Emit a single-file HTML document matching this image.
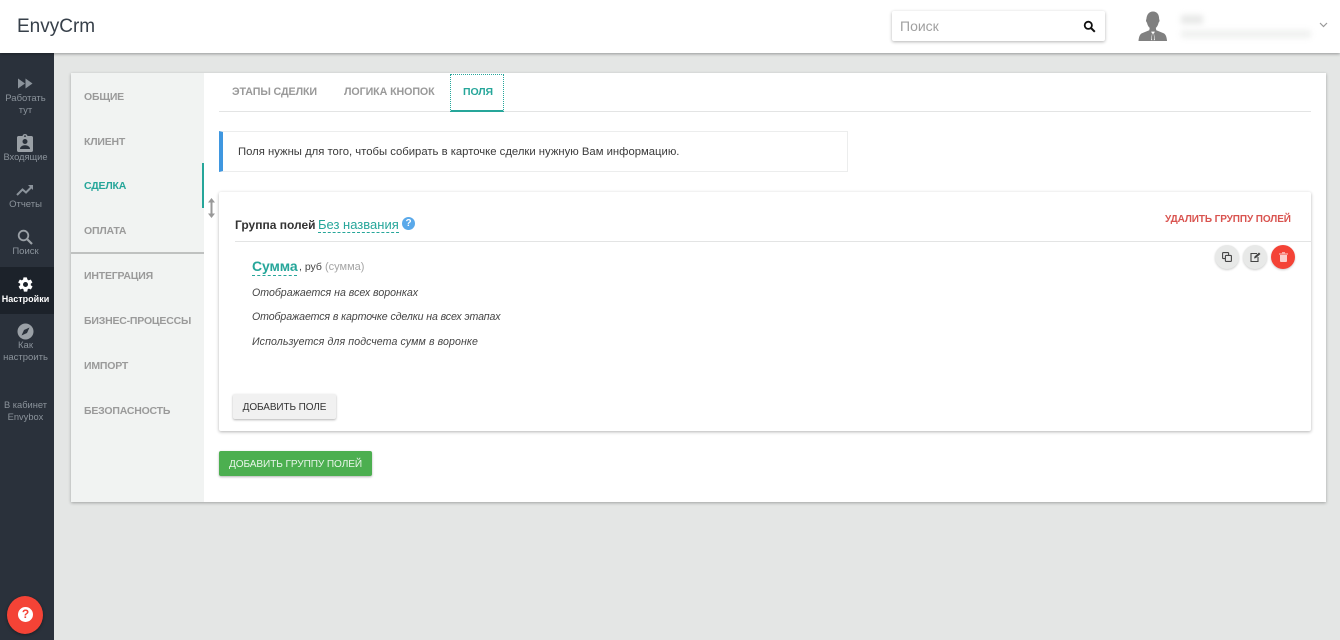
<!DOCTYPE html>
<html lang="ru"><head><meta charset="utf-8"><title>EnvyCrm</title>
<style>
*{box-sizing:border-box}
html,body{margin:0;padding:0;width:1340px;height:640px;overflow:hidden;background:#e4e6e5;font-family:"Liberation Sans",sans-serif;color:#333}
#w{left:0;top:0;width:1340px;height:640px;filter:blur(.35px)}
div,span,svg{position:absolute}
.t{white-space:nowrap;line-height:1}
.side{left:0;width:51px;text-align:center;color:#8b939b;font-size:9.5px;line-height:12px;white-space:nowrap}
.m{left:84px;font-size:10.5px;letter-spacing:-.2px;font-weight:bold;color:#9a9a9a;white-space:nowrap;line-height:12px}
.tab{font-size:10.7px;font-weight:bold;color:#999;white-space:nowrap;line-height:12px;top:86px;letter-spacing:-.1px}
.it{left:252px;font-size:10.6px;font-style:italic;color:#444;white-space:nowrap;line-height:12px}
.rb{width:24px;height:24px;border-radius:50%;top:245px;background:#e8e9e8;box-shadow:0 1px 2px rgba(0,0,0,.2)}
</style></head><body><div id="w">

<div style="left:0;top:0;width:1340px;height:53px;background:#fff;box-shadow:0 1px 3px rgba(0,0,0,.35);z-index:3"></div>
<div class="t" style="left:17px;top:17px;font-size:19px;color:#37404a;z-index:4">EnvyCrm</div>

<div style="left:892px;top:11px;width:213px;height:30px;background:#fff;border-radius:2px;box-shadow:0 1px 3px rgba(0,0,0,.3);z-index:4"></div>
<div class="t" style="left:900px;top:19px;font-size:14px;color:#a0a0a0;z-index:5">Поиск</div>
<svg style="left:1083px;top:20px;z-index:5" width="13" height="13" viewBox="0 0 13 13"><circle cx="5.3" cy="5.3" r="3.6" fill="none" stroke="#111" stroke-width="1.8"/><path d="M8 8l3.8 3.8" stroke="#111" stroke-width="2"/></svg>

<svg style="left:1138px;top:10px;z-index:5" width="30" height="33" viewBox="0 0 32 34"><path d="M16 1c4.500 0 6.500 3.500 6.500 7.500 0 1.200.8 1.500.3 3-.4 1-.9 1.300-1 2-.4 2-1.700 4-2.800 5l.5 2.500 7.500 3c2.500 1 3.500 3.500 4 8.500H.5c.5-5 1.500-7.500 4-8.500l7.500-3 .5-2.500c-1.100-1-2.400-3-2.800-5-.1-.7-.6-1-1-2-.5-1.500.3-1.800.3-3C9.500 4.500 11.500 1 16 1z" fill="#808080"/><path d="M14 22.500h4l-1 2 1.200 7h-4.400l1.200-7z" fill="#fff"/><path d="M15.300 24.500h1.400l.7 6-1.400 2-1.400-2z" fill="#808080"/></svg>
<div style="left:1181px;top:15px;width:22px;height:9px;background:#e8e9e8;filter:blur(3px);z-index:5"></div>
<div style="left:1181px;top:30px;width:130px;height:8px;background:#f0f1f0;filter:blur(3px);z-index:5"></div>
<svg style="left:1319px;top:22px;z-index:5" width="9" height="6" viewBox="0 0 9 6"><path d="M1 1l3.500 3.500L8 1" fill="none" stroke="#999" stroke-width="1.200"/></svg>

<div style="left:0;top:53px;width:54px;height:587px;background:#2a313b"></div>
<div style="left:0;top:267px;width:54px;height:47px;background:#1c222a"></div>

<svg style="left:17px;top:78px" width="16" height="11" viewBox="0 0 16 11"><path d="M1 .5l7 5-7 5zM8.500.5l7 5-7 5z" fill="#8b939b"/></svg>
<div class="side" style="top:93px">Работать<br>тут</div>
<svg style="left:17px;top:134px" width="16" height="18" viewBox="0 0 16 18"><path d="M1.500 2H5.500C5.800.8 6.800 0 8 0s2.200.8 2.500 2h4c.8 0 1.500.7 1.500 1.500v13c0 .8-.7 1.500-1.500 1.500h-13C.7 18 0 17.300 0 16.500v-13C0 2.700.7 2 1.500 2z" fill="#9aa0a6"/><circle cx="8" cy="7.500" r="2.500" fill="#2a313b"/><path d="M3 15c0-2.500 2.500-3.800 5-3.800s5 1.300 5 3.800z" fill="#2a313b"/><circle cx="8" cy="2.200" r=".9" fill="#2a313b"/></svg>
<div class="side" style="top:151px;font-size:9.3px">Входящие</div>
<svg style="left:16px;top:184px" width="18" height="12" viewBox="0 0 18 12"><path d="M1 11l5.500-5.500 3.500 3L16 2.500" fill="none" stroke="#8b939b" stroke-width="2"/><path d="M12 1h5v5z" fill="#8b939b"/></svg>
<div class="side" style="top:199px">Отчеты</div>
<svg style="left:17px;top:229px" width="16" height="16" viewBox="0 0 16 16"><circle cx="6.500" cy="6.500" r="4.800" fill="none" stroke="#9aa0a6" stroke-width="1.800"/><path d="M10 10l5 5" stroke="#9aa0a6" stroke-width="2.200"/></svg>
<div class="side" style="top:246px">Поиск</div>
<svg style="left:17px;top:276px" width="17" height="17" viewBox="0 0 24 24"><path fill="#fff" d="M19.400 13c.1-.3.100-.7.100-1s0-.7-.1-1l2.100-1.600c.2-.2.300-.4.100-.6l-2-3.500c-.1-.2-.4-.3-.6-.2l-2.500 1c-.5-.4-1.100-.7-1.700-1L14 2.400c0-.2-.2-.4-.5-.4h-4c-.2 0-.4.200-.5.400l-.4 2.700c-.6.200-1.200.6-1.700 1l-2.500-1c-.2-.1-.5 0-.6.200l-2 3.500c-.1.200-.1.500.1.600L4.600 11c-.1.300-.1.700-.1 1s0 .7.100 1l-2.100 1.600c-.2.200-.3.400-.1.600l2 3.500c.1.200.4.300.6.200l2.500-1c.5.400 1.100.7 1.700 1l.4 2.700c0 .2.200.4.500.4h4c.2 0 .4-.2.500-.4l.4-2.700c.6-.2 1.200-.6 1.700-1l2.500 1c.2.100.5 0 .6-.2l2-3.500c.1-.2.100-.5-.1-.6zM12 15.500a3.500 3.500 0 1 1 0-7 3.500 3.500 0 0 1 0 7z"/></svg>
<div class="side" style="top:293px;color:#fff;font-weight:bold;font-size:9px">Настройки</div>
<svg style="left:17px;top:323px" width="17" height="17" viewBox="0 0 17 17"><circle cx="8.500" cy="8.500" r="8" fill="#9aa0a6"/><path d="M12.500 4.500L10 10 4.500 12.500 7 7z" fill="#2a313b"/></svg>
<div class="side" style="top:340px">Как<br>настроить</div>
<div class="side" style="top:399px;font-size:9.3px">В кабинет<br>Envybox</div>

<div style="left:7px;top:596px;width:36px;height:38px;border-radius:50%;background:#f44336;box-shadow:0 1px 3px rgba(0,0,0,.4)"></div>
<div style="left:18px;top:607px;width:15px;height:15px;border-radius:50%;background:#fff"></div>
<div class="t" style="left:18px;top:608px;width:15px;text-align:center;font-size:12px;font-weight:bold;color:#f44336">?</div>

<div style="left:71px;top:73px;width:1255px;height:429px;background:#fff;box-shadow:0 1px 3px rgba(0,0,0,.3)"></div>
<div style="left:71px;top:73px;width:133px;height:429px;background:#f1f3f2"></div>
<div style="left:71px;top:252px;width:133px;height:2px;background:#bfc1c0"></div>
<div style="left:202px;top:163px;width:2px;height:45px;background:#26a69a"></div>

<div class="m" style="top:91px">ОБЩИЕ</div>
<div class="m" style="top:136px">КЛИЕНТ</div>
<div class="m" style="top:180px;color:#26a69a">СДЕЛКА</div>
<div class="m" style="top:225px">ОПЛАТА</div>
<div class="m" style="top:270px">ИНТЕГРАЦИЯ</div>
<div class="m" style="top:315px">БИЗНЕС-ПРОЦЕССЫ</div>
<div class="m" style="top:360px">ИМПОРТ</div>
<div class="m" style="top:405px">БЕЗОПАСНОСТЬ</div>

<svg style="left:207px;top:198px" width="9" height="20" viewBox="0 0 9 20"><path d="M4.500 0L8 4.500H5.500v11H8L4.500 20 1 15.500h2.500v-11H1z" fill="#999"/></svg>

<div style="left:219px;top:111px;width:1092px;height:1px;background:#e3e4e4"></div>
<div class="tab" style="left:232px;top:86px">ЭТАПЫ СДЕЛКИ</div>
<div class="tab" style="left:344px;top:86px">ЛОГИКА КНОПОК</div>
<div style="left:450px;top:74px;width:54px;height:38px;border:1px dotted #26a69a;border-bottom:2px solid #26a69a"></div>
<div class="tab" style="left:463px;top:86px;color:#26a69a;font-size:10.500px">ПОЛЯ</div>

<div style="left:219px;top:131px;width:629px;height:41px;background:#fff;border:1px solid #eceded;border-left:4px solid #3f97e0"></div>
<div class="t" style="left:238px;top:147px;font-size:11.300px;color:#3a3a3a">Поля нужны для того, чтобы собирать в карточке сделки нужную Вам информацию.</div>

<div style="left:219px;top:192px;width:1092px;height:239px;background:#fff;box-shadow:0 1px 3px rgba(0,0,0,.3);border-radius:2px"></div>
<div class="t" style="left:235px;top:219px;font-size:12px;color:#333;font-weight:bold">Группа полей</div>
<div class="t" style="left:318px;top:218px;font-size:13px;color:#26a69a;padding-bottom:2px;border-bottom:1px dashed #26a69a;height:15px">Без названия</div>
<div style="left:402px;top:217px;width:13px;height:13px;border-radius:50%;background:#5aa9ea"></div>
<div class="t" style="left:402px;top:219px;width:13px;text-align:center;font-size:10px;font-weight:bold;color:#fff">?</div>
<div class="t" style="left:1165px;top:215px;font-size:10px;font-weight:bold;color:#d9534f;letter-spacing:-.1px">УДАЛИТЬ ГРУППУ ПОЛЕЙ</div>
<div style="left:235px;top:241px;width:1076px;height:1px;background:#e3e4e4"></div>

<div class="t" style="left:252px;top:259px;font-size:14px;font-weight:bold;color:#26a69a;height:17px;border-bottom:1px dashed #26a69a;width:45px;letter-spacing:-.1px">Сумма</div>
<div class="t" style="left:299px;top:262px;font-size:10.500px;color:#444">, руб</div>
<div class="t" style="left:325px;top:262px;font-size:11px;color:#a5a5a5">(сумма)</div>
<div class="it" style="top:287px">Отображается на всех воронках</div>
<div class="it" style="top:311px;letter-spacing:-.1px">Отображается в карточке сделки на всех этапах</div>
<div class="it" style="top:336px;letter-spacing:.1px">Используется для подсчета сумм в воронке</div>

<div class="rb" style="left:1215px"></div>
<svg style="left:1222px;top:252px" width="10" height="10" viewBox="0 0 10 10"><rect x=".6" y=".6" width="6" height="6" rx=".8" fill="none" stroke="#444" stroke-width="1.100"/><rect x="3.400" y="3.400" width="6" height="6" rx=".8" fill="#e8e9e8" stroke="#444" stroke-width="1.100"/></svg>
<div class="rb" style="left:1243px"></div>
<svg style="left:1250px;top:252px" width="11" height="10" viewBox="0 0 11 10"><path d="M7 1.500H1v8h7V5" fill="none" stroke="#444" stroke-width="1.100"/><path d="M4 6.500l.5-2L9 .5l1.500 1.500-4.500 4z" fill="#444"/></svg>
<div class="rb" style="left:1271px;background:#f44336"></div>
<svg style="left:1279px;top:252px" width="9" height="10" viewBox="0 0 9 10"><path d="M0 1.500h9v1H0zM3 .3h3v1H3zM1 3h7v6c0 .6-.4 1-1 1H2c-.6 0-1-.4-1-1z" fill="#fbd0cc"/></svg>

<div style="left:233px;top:394px;width:103px;height:25px;background:#f1f1f1;border-radius:2px;box-shadow:0 1px 2px rgba(0,0,0,.3)"></div>
<div class="t" style="left:233px;top:403px;width:103px;text-align:center;font-size:10px;color:#333;letter-spacing:-.1px">ДОБАВИТЬ ПОЛЕ</div>

<div style="left:219px;top:451px;width:153px;height:25px;background:#4caf50;border-radius:2px;box-shadow:0 1px 2px rgba(0,0,0,.3)"></div>
<div class="t" style="left:219px;top:460px;width:153px;text-align:center;font-size:10.100px;color:#e8f5e9;letter-spacing:-.1px">ДОБАВИТЬ ГРУППУ ПОЛЕЙ</div>

</div></body></html>
